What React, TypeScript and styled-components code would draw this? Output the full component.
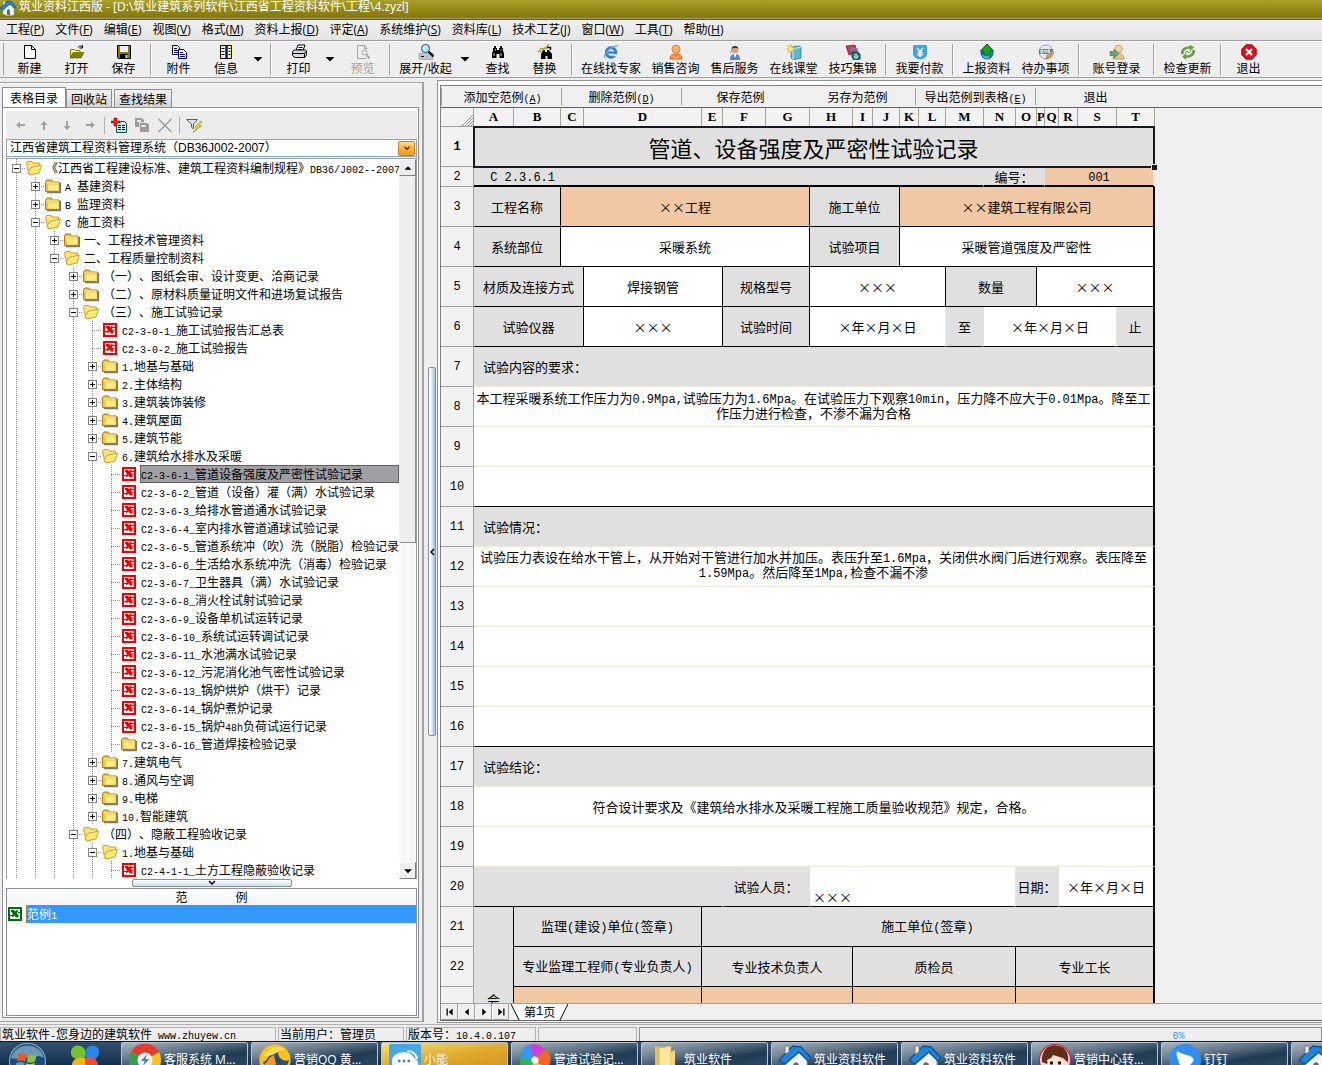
import React from 'react';
import styled, { createGlobalStyle, css } from 'styled-components';

const CJK = '"Noto Sans CJK SC", sans-serif';
const UI = `"Open Sans", ${CJK}`;
const MONO = '"Liberation Mono", monospace';

const GlobalStyle = createGlobalStyle`
  *, *::before, *::after { box-sizing: border-box; }
  body { margin: 0; background: #eeeeee; }
  body, button, select, table {
    font-family: ${CJK};
    font-size: 12px;
    line-height: 16px;
    color: #000;
    text-spacing-trim: space-all;
  }
  button {
    margin: 0; padding: 0; border: 0; background: none; white-space: nowrap;
  }
  ul { list-style: none; margin: 0; padding: 0; }
  svg { display: block; flex: none; }
`;

/* ---------- text with half-width Latin runs ---------- */

const Latin = styled.span<{ $size: number }>`
  font-family: ${MONO};
  font-size: ${p => p.$size}px;
  line-height: 1;
  white-space: pre;
`;

function Mixed({ text, size = 10 }: { text: string; size?: number }) {
  return (
    <>
      {text.split(/([\x20-\x7e]+)/).map((run, i) =>
        i % 2 ? <Latin key={i} $size={size}>{run}</Latin> : run
      )}
    </>
  );
}

function Mnemonic({ label, letter, latin }: { label: string; letter: string; latin?: boolean }) {
  if (latin) {
    return <>{label}<Latin $size={10}>(<u>{letter}</u>)</Latin></>;
  }
  return <>{label}(<u>{letter}</u>)</>;
}

/* ---------- icons ---------- */

const art: Record<string, React.ReactNode> = {
  new: <path d="M2.500 1.500h7l4 4v9h-11zM9.500 1.500v4h4" fill="#fff" stroke="#000" />,
  open: (
    <>
      <path d="M1.500 13V5.500h4l1 1h4.500V9" fill="#ffff66" stroke="#808000" />
      <path d="M1 14l3-5.500h11L12 14z" fill="#808000" stroke="#5c5c00" strokeWidth=".6" />
      <path d="M9 3.500c1.500-2 3.500-2 4.500 0M13.500 1v3h-3" fill="none" stroke="#000" />
    </>
  ),
  save: (
    <>
      <path d="M1.500 1.500h13v13h-12l-1-1z" fill="#808000" stroke="#000" />
      <path d="M4 2h8v6H4z" fill="#eee" />
      <path d="M4 10h8v4.500H4z" fill="#000" />
      <path d="M9.500 11h2v3h-2z" fill="#eee" />
    </>
  ),
  copy: (
    <>
      <path d="M1.500 1.500h5l2 2v7h-7z" fill="#fff" stroke="#000" />
      <path d="M3 4.500h3M3 6.500h4M3 8.500h4" stroke="#000080" />
      <path d="M7.500 5.500h5l3 3v6h-8z" fill="#fff" stroke="#000080" />
      <path d="M9 8.500h3M9 10.500h5M9 12.500h5" stroke="#000080" />
    </>
  ),
  info: (
    <>
      <path d="M2.500 1.500h11v13h-11z" fill="#ffff33" stroke="#000" />
      <path d="M6 2h5v12H6z" fill="#fff" />
      <path d="M8.500 1v14" stroke="#0000d0" strokeWidth="2.500" />
      <path d="M3.500 4.500h3m-3 3h3m-3 3h3M10.500 4.500h2m-2 3h2m-2 3h2" stroke="#000" />
    </>
  ),
  print: (
    <>
      <path d="M5 6.500l2-5.500h7l-2 5.500" fill="#fff" stroke="#000" />
      <path d="M7.500 3.500h4M7 5.500h4" stroke="#000" />
      <path d="M1.500 7.500l2-1.500h11l1 1v4l-2 2.500H4l-2.500-2z" fill="#ddd" stroke="#000" />
      <path d="M2 9.500h11.500l1.500-2M4 13.500h9M13.500 9.500v4" stroke="#000" fill="none" />
      <path d="M9 11h2v1H9z" fill="#ee0" />
    </>
  ),
  preview: (
    <g fill="none" stroke="#a5a5a5">
      <path d="M11.500 5V3.500l-2-2h-7v13h9M9.500 1.500v3h3" />
      <circle cx="9.500" cy="8.500" r="2.500" />
      <path d="M11.500 10.500l3 4" strokeWidth="2" />
    </g>
  ),
  expand: (
    <>
      <path d="M1 9.500h14v6H1z" fill="#c4c4c4" stroke="#999" strokeWidth=".6" />
      <path d="M3 12.500h3" stroke="#000" />
      <path d="M10.500 7.500l5 5" stroke="#111" strokeWidth="2.400" />
      <circle cx="7.500" cy="4.500" r="4" fill="#bfe6ff" stroke="#1d4b86" />
      <path d="M5.500 4.500c0-1.500 1-2 2-2" stroke="#fff" fill="none" />
    </>
  ),
  find: (
    <>
      <path d="M4 2h2v2h1v2h2V4h1V2h2v2h1v3l1 2v5H9.500v-4h-3v4H2V9l1-2V4h1z" fill="#000" />
      <path d="M4 9v3M11 9v3M5.500 5v1.500M11 5v1.500" stroke="#eee" strokeWidth=".8" />
    </>
  ),
  replace: (
    <>
      <path d="M6 6h2v2h2V6h2l3 4v5h-4.500v-3H8.500v3H4v-5z" fill="#000" />
      <path d="M1 8l3-4 2 1 6-5-3 5-2-.5-3 3z" fill="#ffee00" stroke="#776600" strokeWidth=".6" />
      <path d="M10 3.500h3.500V6" fill="none" stroke="#000" strokeWidth="1.400" />
    </>
  ),
  ie: (
    <>
      <circle cx="8" cy="8.500" r="4.700" fill="none" stroke="#2f7de0" strokeWidth="3" />
      <path d="M5 8.500h7" stroke="#2f7de0" strokeWidth="2.200" />
      <path d="M10 10.200h5v2h-5z" fill="#eee" />
      <path d="M1.500 14c-1.500-4 8-13 13.500-12" fill="none" stroke="#6fa9ea" strokeWidth="1.200" />
    </>
  ),
  sales: (
    <>
      <path d="M2 15c0-4 2.500-5 6-5s6 1 6 5z" fill="#ff8a3c" stroke="#e8641b" />
      <circle cx="8" cy="5.200" r="4" fill="#ffb066" stroke="#f07a2a" />
      <path d="M5 12.500l3 1.500 3-1.500" fill="none" stroke="#ffd9b0" />
    </>
  ),
  support: (
    <>
      <path d="M3 16c0-5 2-6 5-6s5 1 5 6z" fill="#5b7fd0" />
      <path d="M6.500 10h3L8 14z" fill="#fff" />
      <circle cx="8" cy="5.800" r="3.400" fill="#d9a27c" />
      <path d="M4.500 5C4.500 1 11.500 1 11.500 5L10 4H6z" fill="#333" />
      <path d="M3 9c2-1 2-2 1.500-4" stroke="#99a" fill="none" />
    </>
  ),
  lesson: (
    <>
      <path d="M5 3l8-1 2 1v11l-8 2-2-2z" fill="#5fb4dc" stroke="#2b7da8" strokeWidth=".8" />
      <path d="M7 5l8-2M7 5v11" stroke="#c9ecfa" />
      <path d="M5 0v10M0 5h10M1.500 1.500l7 7M8.500 1.500l-7 7" stroke="#f5b61c" strokeWidth="1.200" />
      <circle cx="5" cy="5" r="2" fill="#fff6a8" />
    </>
  ),
  tips: (
    <>
      <path d="M1 2l9-1 2 7-8 3z" fill="#c43a52" stroke="#7d1830" strokeWidth=".7" />
      <path d="M4 3l9 1 1 6-7 1z" fill="#7680b8" opacity=".7" />
      <path d="M7 8h5l3 2v5l-6 1-2-3z" fill="#21797c" stroke="#0c4044" />
      <path d="M9 13l2-3 2 3zM9.500 14h3" stroke="#c9f5ef" fill="none" />
    </>
  ),
  pay: (
    <>
      <path d="M2 1h12l1 1v7c0 4-3 6-7 6s-7-2-7-6V2z" fill="#35a7ee" />
      <path d="M5 4l3 3.500L11 4M8 7.500V13M5 8.500h6M5 10.800h6" stroke="#fff" strokeWidth="1.600" fill="none" />
    </>
  ),
  upload: (
    <>
      <circle cx="8" cy="9" r="6.500" fill="#1c62c8" />
      <path d="M3 12c2-4 4 1 6-1s5 1 4-3l-4 7-4-1z" fill="#35b0f0" />
      <path d="M8 0l6.500 7h-3.500v4H5V7H1.500z" fill="#18a51c" stroke="#0b6c12" />
    </>
  ),
  todo: (
    <>
      <circle cx="8" cy="8" r="7" fill="#dfe9fa" stroke="#8ea6d8" />
      <path d="M1 5h14v5H1z" fill="#4f7fd0" />
      <path d="M3 6v3h1.500l.5-1.500L4.500 6zM6.500 6l1 3 1-3M10 6v3h1.500V6z" stroke="#fff" fill="none" />
      <path d="M8 15l1-3.500 5-4.500 2 2-5 4.500z" fill="#f59b1e" stroke="#a55d0c" strokeWidth=".6" />
      <path d="M14 7l2 2" stroke="#e77ab5" strokeWidth="1.500" />
    </>
  ),
  login: (
    <>
      <path d="M4 15c0-4 2-5 5.500-5s5.500 1 5.500 5z" fill="#e6c38a" stroke="#c79d5d" />
      <circle cx="9.500" cy="5" r="3.800" fill="#f0d5a5" stroke="#cda566" />
      <path d="M1 7.500h4V5l5 4.500L5 14v-2.500H1z" fill="#68a077" stroke="#447a52" strokeWidth=".7" />
    </>
  ),
  update: (
    <g fill="none" stroke="#6f9a4c" strokeWidth="2.600">
      <path d="M2.500 10c-1-4 3-7 8-6.500" />
      <path d="M13.500 6c1 4-3 7-8 6.500" />
      <path d="M10 1l4 2.500-4 3zM6 9.500L2.500 12.500l3.500 3z" fill="#6f9a4c" strokeWidth=".5" />
      <path d="M5 9l2-2 1.500 2L11 7" strokeWidth="1" />
    </g>
  ),
  exit: (
    <>
      <path d="M5 .8h6L15.200 5v6L11 15.200H5L.8 11V5z" fill="#d8151c" stroke="#9c0a10" />
      <path d="M5 5l6 6M11 5l-6 6" stroke="#fff" strokeWidth="2.200" />
    </>
  ),
  house: (
    <>
      <path d="M0 13l3-3 3 4zM16 13l-3-3-2 5z" fill="#3fa935" />
      <path d="M3 7l5-4 6 4v8l-6 1-5-2z" fill="#f4f6f8" stroke="#9aa6b0" strokeWidth=".6" />
      <path d="M7 15v-4c0-2.500 3-2.500 3 0v4.500z" fill="#5f6b75" />
      <path d="M0 8L7 1l4 .5L16 7l-1.500 1.500L10 4 3 10z" fill="#1d85dd" stroke="#0d5498" strokeWidth=".7" />
      <path d="M3 1h2v3L3 5z" fill="#eee" stroke="#777" strokeWidth=".5" />
    </>
  ),
  arrowLeft: <path d="M3 8l4-3.500V7h5v2H7v2.500z" fill="#a0a0a0" />,
  arrowUp: <path d="M8 4l3.500 4H9v5H7V8H4.500z" fill="#a0a0a0" />,
  arrowDown: <path d="M8 13l3.500-4H9V4H7v5H4.500z" fill="#a0a0a0" />,
  arrowRight: <path d="M13 8L9 4.500V7H4v2h5v2.500z" fill="#a0a0a0" />,
  addDoc: (
    <>
      <path d="M5.500 4.500h8l2 2v9h-10z" fill="#b9f0f0" stroke="#1d4a55" />
      <path d="M7 8.500h3m1 0h3M7 10.500h3m1 0h3M7 12.500h3m1 0h3" stroke="#000" />
      <path d="M0 4h3V1h3v3h3v2H6v3H3V6H0z" fill="#d42a1a" stroke="#7c0f06" strokeWidth=".6" />
    </>
  ),
  multi: (
    <>
      <path d="M1 1h7l2 2v7H1z" fill="#9c9c9c" />
      <path d="M3 3h4v2H3z" fill="#eee" />
      <path d="M5.500 5.500h7l3 2v8h-10z" fill="#9c9c9c" stroke="#eee" strokeWidth=".8" />
      <path d="M7.500 8h4v2h-4z" fill="#eee" />
    </>
  ),
  cross: <path d="M1.500 2l13 13M14.500 2L1.500 15" stroke="#9c9c9c" strokeWidth="1.500" />,
  filter: (
    <>
      <path d="M.5 2.500h11L7.500 7v5l-2-2V7z" fill="#dfe6ea" stroke="#47606e" />
      <path d="M14.500 4L9 10h2.500L7 15.500l8-6.500h-2.500L16 5z" fill="#f7e22a" stroke="#8c7a0a" strokeWidth=".6" />
    </>
  ),
  folder: (
    <>
      <path d="M2 14.500h13.500V5" stroke="#777" fill="none" strokeWidth="1.400" />
      <path d="M.5 4l1.500-2h4l1.500 2H14l.5 1v8.500H.5z" fill="#f3c23f" stroke="#b0800f" />
      <path d="M3 6.500h10.500v6H3z" fill="#ffec8c" />
      <path d="M1.500 5h12" stroke="#fff3b5" />
    </>
  ),
  folderOpen: (
    <>
      <path d="M.5 3l1-1.500h4.500l1 1.500h6.500v3L3 14.500z" fill="#fbe27a" stroke="#d3a020" />
      <path d="M5 7.500l10.500-2.500L13 13l-9 2-2-3z" fill="#ffe870" stroke="#d3a020" />
      <path d="M6.500 8.500l7-1.500" stroke="#fffbd8" />
    </>
  ),
  sheetRed: (
    <>
      <path d="M1 1h14v14H1z" fill="#f00000" />
      <path d="M3 3h10v10H3z" fill="#fff" />
      <path d="M4 4h3l4.500 5v2.500H9L4 5.500z" fill="#f00000" />
      <path d="M10.500 4.500L5 10.500" stroke="#f00000" strokeWidth="2" />
      <path d="M11 5.500h2M11 8h2M3 9.500h2" stroke="#f00000" />
    </>
  ),
  sheetGreen: (
    <>
      <path d="M1 1h14v14H1z" fill="#066b0d" />
      <path d="M3 3h10v10H3z" fill="#fff" />
      <path d="M4 4h3l4.500 5v2.500H9L4 5.500z" fill="#066b0d" />
      <path d="M10.500 4.500L5 10.500" stroke="#066b0d" strokeWidth="2" />
      <path d="M11 6.500h2M3 9.500h2" stroke="#066b0d" />
    </>
  ),
  chevronDown: <path d="M4 6l4 4 4-4" fill="none" stroke="#5b2500" strokeWidth="2" />,
  triUp: <path d="M4 10l4-4 4 4z" fill="#000" />,
  triDown: <path d="M3.500 6h9L8 10.500z" fill="#000" />,
  first: <path d="M4 4h1.500v8H4zM11 4v8L6.500 8z" fill="#000" />,
  prev: <path d="M10 4v8L5.500 8z" fill="#000" />,
  next: <path d="M6 4v8l4.500-4z" fill="#000" />,
  last: <path d="M5 4v8l4.500-4zM10.500 4H12v8h-1.500z" fill="#000" />,
  windows: (
    <>
      <circle cx="8" cy="8" r="7.800" fill="#1b4d7c" stroke="#7fa8c4" strokeWidth=".5" />
      <path d="M.8 6.500a7.500 7.500 0 0 1 14.400 0C11 4 6 8 .8 6.500z" fill="#8fb6cf" opacity=".7" />
      <path d="M4 5c1.500-.8 2.500-.6 3.700 0L7 8c-1-.5-2.200-.6-3.600 0z" fill="#ee5a24" />
      <path d="M8.300 5.200c1.200.5 2.200.5 3.700-.2L11.300 8c-1.500.7-2.500.7-3.600.2z" fill="#82c341" />
      <path d="M3.200 8.600c1.400-.6 2.600-.5 3.600 0L6 11.500c-1-.5-2.200-.5-3.600 0z" fill="#38a6ea" />
      <path d="M7.500 8.800c1.200.5 2.200.5 3.700-.1l-.8 3c-1.400.6-2.500.6-3.600.1z" fill="#fcc82e" />
    </>
  ),
  pinwheel: (
    <>
      <path d="M.5 5c0-4 5-5 7.500-1.500v4C5 9 .5 9 .5 5z" fill="#72c42c" />
      <path d="M8 4.500C9 .5 15.500.5 15.500 4.500S12 10 8 7.500z" fill="#2a86e8" />
      <path d="M8 8c4-1 7 1 7 4s-6 4-7 0z" fill="#ef4a35" />
      <path d="M8 8c-4-1-7 1-7 4s6 4 7 0z" fill="#fbb515" />
    </>
  ),
  chrome: (
    <>
      <circle cx="8" cy="8" r="8" fill="#f5c518" />
      <path d="M8 8L1 4a8 8 0 0 1 14 0z" fill="#e33b2e" />
      <path d="M8 8L1 4a8 8 0 0 0 6 12z" fill="#2fa34c" />
      <circle cx="8" cy="8" r="3.800" fill="#fff" />
      <path d="M9 5L6 8.500h1.800L7 11l3-3.500H8.200z" fill="#3f78f0" />
    </>
  ),
  qq: (
    <>
      <circle cx="8" cy="8" r="7.800" fill="#fbc21a" />
      <path d="M2 9c2 0 2-3 5-4.500 1-1 2-1.500 3-1.200-1 1.700 0 3.700 2 4.700 1 .5 2 .5 3 0-1 4-3 6-7 6-3 0-5-2-6-5z" fill="#2a4f70" />
      <path d="M2.500 10c2-.5 2-3.500 5-4.500l1 4.500-3 3z" fill="#f59c1c" />
      <path d="M2 6c3-4 8-6 11-3-4 0-6 4-11 3z" fill="#ffdf55" />
    </>
  ),
  chat: (
    <>
      <rect width="16" height="16" rx="1" fill="#41a9e6" />
      <path d="M1.500 8.500c0-5 9.500-6 11-1.500 3 1 2.500 5 .5 5.500H4c-2 0-2.500-2-2.500-4z" fill="#fff" />
      <path d="M9 3.500c3 0 5 2 5 4" stroke="#fff" fill="none" />
      <path d="M4.500 8.500h1.200m1.200 0h1.200m1.200 0h1.200" stroke="#2c86c9" strokeWidth="1.300" />
    </>
  ),
  rainbow: (
    <>
      <path d="M8 8L3 1.500C6-1 11 0 13 3z" fill="#d23fd6" />
      <path d="M8 8l5-5.500c4 3 3 8 1 10z" fill="#f8622c" />
      <path d="M8 8l6 4.500c-3 4-8 4-10 2z" fill="#f3c11c" />
      <path d="M8 8l-4 6.500C0 12 0 8 1 5z" fill="#2fb457" />
      <path d="M8 8L.5 7C1 3 3 1 5 .5z" fill="#2b9cf0" />
      <circle cx="8" cy="8" r="1.800" fill="#fff" />
    </>
  ),
  folderBig: (
    <>
      <path d="M3 1l7 1v14H3z" fill="#e6c15a" />
      <path d="M5 2l6-1v15H5z" fill="#fbe79b" stroke="#d6ad45" strokeWidth=".4" />
      <path d="M11 4l2-1v13h-2z" fill="#f3d67a" />
    </>
  ),
  girl: (
    <>
      <circle cx="8" cy="8" r="7.800" fill="#f4d9d3" stroke="#d51e3c" strokeWidth=".6" />
      <path d="M1.500 9C1 2 6 0 9 .8c5 .5 6 5 5.500 8.500L12 7 7 5.500 4 10z" fill="#5f2f1a" />
      <path d="M4 8l4-2 4.500 2.500V13H5z" fill="#fde3d2" />
      <path d="M5.500 9.500h1.500M9.500 9.500H11" stroke="#2a120a" strokeWidth="1.400" />
    </>
  ),
  ding: (
    <>
      <circle cx="8" cy="8" r="8" fill="#2f8ef0" />
      <path d="M4 3.500c3 2 7 2 8 3.500s-1 3-2 4h1.500L7.500 15l.5-3H6.500l.5-1C5 10.500 4.500 9 5 8.500 4 7.500 3.500 5 4 3.500z" fill="#fff" />
    </>
  )
};

function Icon({ name, size = 16 }: { name: string; size?: number }) {
  return <svg width={size} height={size} viewBox="0 0 16 16" aria-hidden="true">{art[name]}</svg>;
}

/* ---------- window frame ---------- */

const Window = styled.div`
  display: flex;
  flex-direction: column;
  height: 100vh;
  overflow: hidden;
  background: #eeeeee;
`;

const TitleBar = styled.header`
  flex: none;
  display: flex;
  align-items: flex-start;
  gap: 3px;
  height: 20px;
  overflow: hidden;
  border-bottom: 1px solid #5f5a3a;
  background: linear-gradient(#aca02e, #9a8f1a 40%, #83770f 90%, #a8a47c);
  color: #fff;
  font-family: ${UI};
  line-height: 14px;
  white-space: pre;
`;

const MenuBar = styled.nav`
  flex: none;
  display: flex;
  align-items: center;
  gap: 11px;
  height: 21px;
  padding-left: 6px;
  border-bottom: 1px solid #a0a0a0;
  background: linear-gradient(#f0f0f0, #e4e4e4);
  button { font-family: ${UI}; }
`;

const Toolbar = styled.div`
  flex: none;
  display: flex;
  align-items: stretch;
  height: 37px;
  padding-left: 3px;
  border-bottom: 1px solid #a0a0a0;
  box-shadow: inset 0 1px #fff;
`;

const Grip = styled.span`
  flex: none;
  align-self: stretch;
  width: 3px;
  margin: 2px 0;
  border-left: 1px solid #a0a0a0;
`;

const ToolButton = styled.button<{ $width: number }>`
  display: flex;
  flex-direction: column;
  align-items: center;
  width: ${p => p.$width}px;
  padding-top: 3px;
  &:disabled { color: #a0a0a0; }
`;

const DropButton = styled.button`
  display: flex;
  align-items: center;
  width: 17px;
`;

const Divider = styled.span`
  flex: none;
  width: 8px;
  margin: 3px 0 2px;
  background: linear-gradient(90deg, transparent 3px, #a0a0a0 3px 4px, #fff 4px 5px, transparent 5px);
`;

const Main = styled.main`
  flex: 1;
  display: flex;
  min-height: 0;
  padding: 2px 0 1px;
`;

/* ---------- left pane ---------- */

const Side = styled.section`
  flex: none;
  display: flex;
  flex-direction: column;
  width: 424px;
  margin: 2px 0 1px;
  padding: 4px 3px 3px 2px;
  border: 1px solid #a0a0a0;
  border-left: 0;
  border-right: 2px solid #a0a0a0;
  box-shadow: inset 0 1px #fff;
`;

const Tabs = styled.div`
  flex: none;
  display: flex;
  align-items: flex-end;
  gap: 2px;
  height: 20px;
`;

const Tab = styled.button<{ $active?: boolean }>`
  height: 18px;
  padding: 0 4px;
  border: 1px solid #8c8e98;
  border-bottom: 0;
  background: linear-gradient(#f2f2f2, #d4d4d4);
  ${p => p.$active && css`
    height: 20px;
    padding: 0 7px;
    margin-right: -2px;
    background: #fff;
  `}
`;

const TabPage = styled.div`
  flex: 1;
  display: flex;
  flex-direction: column;
  min-height: 0;
  padding: 3px 1px 1px 3px;
  border: 1px solid #8c8e98;
  background: #fff;
`;

const TreeTools = styled.div`
  flex: none;
  display: flex;
  align-items: center;
  gap: 7px;
  height: 28px;
  padding-left: 7px;
  background: #ececec;
`;

const ToolLine = styled.span`
  width: 1px;
  height: 17px;
  margin: 0 -1px;
  background: #b0b0b0;
`;

const Combo = styled.label`
  flex: none;
  display: flex;
  align-items: center;
  height: 18px;
  padding-right: 1px;
  margin-bottom: 1px;
  border: 1px solid #a0a0a0;
  border-bottom-color: #7aa7d0;
`;

const ComboSelect = styled.select`
  flex: 1;
  min-width: 0;
  height: 16px;
  padding: 0 3px;
  border: 0;
  appearance: none;
  background: #fff;
  font-family: "Liberation Sans", ${CJK};
`;

const ComboArrow = styled.span`
  display: grid;
  place-items: center;
  width: 17px;
  height: 15px;
  border: 1px solid #b8862a;
  border-radius: 2px;
  background: linear-gradient(#ffdc8e, #ffb13a 50%, #f99a16);
`;

const TreeFrame = styled.div`
  flex: 1;
  display: flex;
  min-height: 0;
  border: 1px solid #a0a0a0;
  border-bottom: 0;
`;

const Tree = styled.ul`
  flex: 1;
  min-width: 0;
  overflow: hidden;
`;

const dots = 'repeating-linear-gradient(#909090 0 1px, transparent 1px 2px)';
const dotsAcross = 'repeating-linear-gradient(90deg, #909090 0 1px, transparent 1px 2px)';

const TreeRow = styled.li`
  display: flex;
  align-items: center;
  height: 18px;
`;

const Guide = styled.span<{ $branch?: boolean }>`
  flex: none;
  display: flex;
  align-items: center;
  width: 19px;
  height: 18px;
  padding-left: 5px;
  background-image: ${dots}, ${p => (p.$branch ? dotsAcross : 'none')};
  background-repeat: no-repeat;
  background-size: 1px 18px, 9px 1px;
  background-position: 9px 0, 9px 9px;
`;

const Expander = styled.button`
  display: grid;
  place-items: center;
  width: 9px;
  height: 9px;
  border: 1px solid #848484;
  background: #fff;
`;

const TreeLabel = styled.button<{ $selected?: boolean }>`
  flex: none;
  height: 18px;
  margin-left: 3px;
  padding: 0 1px;
  border: 1px solid transparent;
  border-width: 1px 0;
  line-height: 14px;
  text-align: left;
  ${p => p.$selected && css`
    flex: 1;
    border: 1px solid #606060;
    padding: 0;
    background: #a09fa4;
  `}
`;

const ScrollBar = styled.div`
  flex: none;
  display: flex;
  flex-direction: column;
  width: 17px;
  background: repeating-conic-gradient(#f4f4f4 0 25%, #fff 0 50%) 0 0 / 2px 2px;
`;

const ScrollButton = styled.button`
  display: grid;
  place-items: center;
  height: 17px;
  border: 1px solid #fff;
  border-right-color: #808080;
  border-bottom-color: #808080;
  background: #eeeeee;
`;

const ScrollThumb = styled.div`
  height: 51%;
  border: 1px solid #eee;
  border-right-color: #909090;
  border-bottom-color: #909090;
  background: #eeeeee;
`;

const ScrollSpace = styled.span`
  flex: 1;
`;

const SplitRow = styled.div`
  flex: none;
  display: flex;
  justify-content: center;
  height: 9px;
`;

const SplitHandle = styled.button`
  display: grid;
  place-items: center;
  width: 160px;
  height: 8px;
  overflow: hidden;
  border: 1px solid #8c8e98;
  border-radius: 2px;
  background: linear-gradient(#fff, #c8e2ee);
`;

const Samples = styled.section`
  flex: none;
  height: 128px;
  border: 1px solid #8c8e98;
`;

const SamplesHead = styled.h2`
  display: flex;
  justify-content: center;
  gap: 48px;
  height: 16px;
  margin: 0;
  background: linear-gradient(#fff, #f2f4f6);
  font-size: 12px;
  font-weight: 400;
`;

const SampleRow = styled.div`
  display: flex;
  align-items: center;
  gap: 3px;
  height: 18px;
`;

const SampleLabel = styled.button`
  flex: 1;
  height: 18px;
  border: 1px dotted #b8793e;
  background: #3399ff;
  color: #fff;
  line-height: 14px;
  text-align: left;
`;

const Splitter = styled.div`
  flex: none;
  display: flex;
  flex-direction: column;
  justify-content: center;
  width: 13px;
  padding: 0 1px 0 4px;
`;

const SplitterGrip = styled.button`
  display: grid;
  place-items: center;
  height: 369px;
  overflow: hidden;
  border: 1px solid #8c8e98;
  border-radius: 2px;
  background: linear-gradient(90deg, #fff, #e4f2f8 40%, #98c2da);
`;

/* ---------- right pane ---------- */

const Work = styled.section`
  flex: 1;
  display: flex;
  flex-direction: column;
  min-width: 0;
  padding: 4px 0 1px 2px;
  border: 1px solid #909090;
  border-right: 0;
  background: #fff;
`;

const WorkInner = styled.div`
  flex: 1;
  display: flex;
  flex-direction: column;
  min-height: 0;
  border: 1px solid #808080;
  border-right: 0;
  border-bottom-color: #606060;
  background: #efefef;
`;

const SheetTools = styled.div`
  flex: none;
  display: flex;
  align-items: center;
  height: 22px;
  border-bottom: 1px solid #606060;
`;

const SheetTool = styled.button<{ $width?: number; $line?: boolean }>`
  width: ${p => p.$width ?? 120}px;
  height: 17px;
  border-right: 1px solid ${p => (p.$line ? '#a0a0a0' : 'transparent')};
`;

const SheetScroll = styled.div`
  flex: 1;
  min-height: 0;
  overflow: hidden;
`;

const Sheet = styled.table`
  width: 714px;
  table-layout: fixed;
  border-collapse: separate;
  border-spacing: 0;
  th, td { padding: 0; }
`;

const SheetRow = styled.tr<{ $height: number }>`
  height: ${p => p.$height}px;
`;

const ColHead = styled.th`
  height: 19px;
  border-right: 1px solid #a9a693;
  border-bottom: 1px solid #a0a0a0;
  background: #f2f2f2;
  font: bold 13px/18px "Liberation Serif", serif;
  overflow: hidden;
`;

const Corner = styled(ColHead)`
  vertical-align: bottom;
  svg { margin-left: auto; }
`;

const RowHead = styled.th<{ $bold?: boolean }>`
  border-right: 1px solid #a0a0a0;
  border-bottom: 1px solid #a0a0a0;
  background: #f2f2f2;
  font: ${p => (p.$bold ? 'bold' : 'normal')} 12px/16px ${MONO};
`;

type Fill = 'gray' | 'white' | 'peach';
const fills: Record<Fill, string> = { gray: '#e0e0e0', white: '#ffffff', peach: '#f0c8a4' };

const Cell = styled.td<{
  $fill: Fill; $right: string; $bottom: string; $thick?: boolean; $align?: string;
}>`
  background: ${p => fills[p.$fill]};
  border-right: 1px solid ${p => p.$right};
  border-bottom: ${p => (p.$thick ? 2 : 1)}px solid ${p => p.$bottom};
  text-align: ${p => p.$align ?? 'center'};
  font-size: 13px;
  line-height: 13px;
  white-space: nowrap;
  &:last-child { border-right-width: 2px; }
`;

const Indent = styled.span`
  display: block;
  padding: 0 9px;
`;

const Low = styled.span`
  display: block;
  padding: 20px 3px 0;
`;

const Wrapped = styled.span`
  display: block;
  padding-bottom: 3px;
  white-space: pre;
`;

const SignCell = styled(Cell)`
  && {
    vertical-align: top;
    padding-top: 86px;
  }
`;

const TitleCell = styled(Cell)`
  position: relative;
  font-size: 22px;
  line-height: 30px;
  &::before {
    content: '';
    position: absolute;
    inset: -1px -2px -2px -1px;
    border: 2px solid #181822;
  }
  &::after {
    content: '';
    position: absolute;
    right: -4px;
    bottom: -4px;
    width: 6px;
    height: 6px;
    border: 1px solid #fff;
    border-right: 0;
    border-bottom: 0;
    background: #181822;
  }
`;

const PageBar = styled.div`
  flex: none;
  display: flex;
  height: 17px;
  border-top: 1px solid #a0a0a0;
`;

const PageButton = styled.button`
  display: grid;
  place-items: center;
  width: 17px;
  border-right: 1px solid #a0a0a0;
  border-bottom: 1px solid #a0a0a0;
  border-left: 1px solid #fff;
`;

const PageTab = styled.button`
  display: flex;
  align-items: center;
  margin-left: 2px;
  background: linear-gradient(#fff, #fff) 7px 0 / calc(100% - 14px) 100% no-repeat;
`;

/* ---------- status bar and taskbar ---------- */

const StatusBar = styled.footer`
  flex: none;
  display: flex;
  gap: 2px;
  height: 17px;
  padding-top: 2px;
  border-top: 1px solid #b0b0b0;
`;

const StatusCell = styled.div<{ $width?: number }>`
  ${p => (p.$width ? css`flex: none; width: ${p.$width}px;` : css`flex: 1;`)}
  border: 1px solid #b4b4b4;
  border-width: 1px 1px 0;
  padding-left: 1px;
  line-height: 12px;
  white-space: nowrap;
`;

const Progress = styled(StatusCell)`
  padding-left: 396px;
  color: #3399ff;
  text-align: center;
  border-color: #909090;
`;

const Taskbar = styled.nav`
  flex: none;
  display: flex;
  gap: 3px;
  height: 24px;
  overflow: hidden;
  border-top: 1px solid #0a1622;
  background: linear-gradient(#33506e, #14304c);
`;

const Launch = styled.div`
  flex: none;
  display: flex;
  align-items: flex-start;
  gap: 24px;
  width: 118px;
  padding: 1px 0 0 9px;
`;

const TaskButton = styled.button<{ $active?: boolean }>`
  flex: none;
  display: flex;
  align-items: center;
  gap: 3px;
  width: 127px;
  height: 36px;
  padding-left: 7px;
  border: 1px solid #b9c6d2;
  border-radius: 2px;
  background: ${p => p.$active
    ? 'linear-gradient(170deg, #f6e27a, #e0a92c 45%, #cf8a1c)'
    : 'linear-gradient(170deg, #a9b4be 0, #66798a 30%, #1f3b55 54%, #35506a)'};
  color: #fff;
  font-family: ${UI};
`;

/* ---------- data ---------- */

const menus: [string, string][] = [
  ['工程', 'P'], ['文件', 'F'], ['编辑', 'E'], ['视图', 'V'], ['格式', 'M'], ['资料上报', 'D'],
  ['评定', 'A'], ['系统维护', 'S'], ['资料库', 'L'], ['技术工艺', 'J'], ['窗口', 'W'], ['工具', 'T'], ['帮助', 'H']
];

type Tool = { icon: string; label: string; width?: number; drop?: boolean; off?: boolean };
const tools: (Tool | null)[] = [
  { icon: 'new', label: '新建' }, { icon: 'open', label: '打开' }, { icon: 'save', label: '保存' }, null,
  { icon: 'copy', label: '附件' }, { icon: 'info', label: '信息', width: 48, drop: true }, null,
  { icon: 'print', label: '打印', drop: true }, { icon: 'preview', label: '预览', off: true }, null,
  { icon: 'expand', label: '展开/收起', width: 63, drop: true },
  { icon: 'find', label: '查找' }, { icon: 'replace', label: '替换' }, null,
  { icon: 'ie', label: '在线找专家', width: 70 }, { icon: 'sales', label: '销售咨询', width: 59 },
  { icon: 'support', label: '售后服务', width: 59 }, { icon: 'lesson', label: '在线课堂', width: 59 },
  { icon: 'tips', label: '技巧集锦', width: 59 }, null,
  { icon: 'pay', label: '我要付款', width: 59 }, null,
  { icon: 'upload', label: '上报资料', width: 59 }, { icon: 'todo', label: '待办事项', width: 59 }, null,
  { icon: 'login', label: '账号登录', width: 67 }, null,
  { icon: 'update', label: '检查更新', width: 59 }, null,
  { icon: 'exit', label: '退出' }
];

const moveTools: [string, string][] = [
  ['arrowLeft', '左移'], ['arrowUp', '上移'], ['arrowDown', '下移'], ['arrowRight', '右移']
];
const editTools: [string, string][] = [['addDoc', '添加'], ['multi', '复制'], ['cross', '删除']];

type Node = [depth: number, kind: '+' | '-' | 'x' | 'f', label: string];
const nodes: Node[] = [
  [0, '-', '《江西省工程建设标准、建筑工程资料编制规程》DB36/J002--2007'],
  [1, '+', 'A 基建资料'],
  [1, '+', 'B 监理资料'],
  [1, '-', 'C 施工资料'],
  [2, '+', '一、工程技术管理资料'],
  [2, '-', '二、工程质量控制资料'],
  [3, '+', '（一）、图纸会审、设计变更、洽商记录'],
  [3, '+', '（二）、原材料质量证明文件和进场复试报告'],
  [3, '-', '（三）、施工试验记录'],
  [4, 'x', 'C2-3-0-1_施工试验报告汇总表'],
  [4, 'x', 'C2-3-0-2_施工试验报告'],
  [4, '+', '1.地基与基础'],
  [4, '+', '2.主体结构'],
  [4, '+', '3.建筑装饰装修'],
  [4, '+', '4.建筑屋面'],
  [4, '+', '5.建筑节能'],
  [4, '-', '6.建筑给水排水及采暖'],
  [5, 'x', 'C2-3-6-1_管道设备强度及严密性试验记录'],
  [5, 'x', 'C2-3-6-2_管道（设备）灌（满）水试验记录'],
  [5, 'x', 'C2-3-6-3_给排水管道通水试验记录'],
  [5, 'x', 'C2-3-6-4_室内排水管道通球试验记录'],
  [5, 'x', 'C2-3-6-5_管道系统冲（吹）洗（脱脂）检验记录'],
  [5, 'x', 'C2-3-6-6_生活给水系统冲洗（消毒）检验记录'],
  [5, 'x', 'C2-3-6-7_卫生器具（满）水试验记录'],
  [5, 'x', 'C2-3-6-8_消火栓试射试验记录'],
  [5, 'x', 'C2-3-6-9_设备单机试运转记录'],
  [5, 'x', 'C2-3-6-10_系统试运转调试记录'],
  [5, 'x', 'C2-3-6-11_水池满水试验记录'],
  [5, 'x', 'C2-3-6-12_污泥消化池气密性试验记录'],
  [5, 'x', 'C2-3-6-13_锅炉烘炉（烘干）记录'],
  [5, 'x', 'C2-3-6-14_锅炉煮炉记录'],
  [5, 'x', 'C2-3-6-15_锅炉48h负荷试运行记录'],
  [5, 'f', 'C2-3-6-16_管道焊接检验记录'],
  [4, '+', '7.建筑电气'],
  [4, '+', '8.通风与空调'],
  [4, '+', '9.电梯'],
  [4, '+', '10.智能建筑'],
  [3, '-', '（四）、隐蔽工程验收记录'],
  [4, '-', '1.地基与基础'],
  [5, 'x', 'C2-4-1-1_土方工程隐蔽验收记录']
];
const selectedNode = 17;

const columns: [string, number][] = [
  ['A', 40], ['B', 47], ['C', 23], ['D', 118], ['E', 21], ['F', 43], ['G', 44], ['H', 43], ['I', 20], ['J', 27],
  ['K', 19], ['L', 27], ['M', 38], ['N', 32], ['O', 21], ['P', 8], ['Q', 14], ['R', 19], ['S', 39], ['T', 38]
];

const BLACK = '#000';
const PALE = '#ece9d8';

type CellData = {
  t?: string; span: number; f?: Fill; soft?: boolean; kind?: 'indent' | 'low' | 'wrap' | 'title' | 'sign';
};
type RowData = { height?: number; soft?: boolean; thick?: boolean; cells: CellData[] };

const blank = (soft = true): RowData => ({ soft, cells: [{ span: 20, f: 'white' }] });

const rows: RowData[] = [
  { soft: true, cells: [{ t: '管道、设备强度及严密性试验记录', span: 20, kind: 'title' }] },
  {
    height: 20, thick: true, cells: [
      { t: ' C 2.3.6.1', span: 13, soft: true, kind: 'indent' },
      { t: '编号：', span: 3, soft: true },
      { t: '001', span: 4, f: 'peach', soft: true }
    ]
  },
  {
    cells: [
      { t: '工程名称', span: 2 }, { t: '××工程', span: 5, f: 'peach' },
      { t: '施工单位', span: 3 }, { t: '××建筑工程有限公司', span: 10, f: 'peach' }
    ]
  },
  {
    cells: [
      { t: '系统部位', span: 2 }, { t: '采暖系统', span: 5, f: 'white' },
      { t: '试验项目', span: 3 }, { t: '采暖管道强度及严密性', span: 10, f: 'white' }
    ]
  },
  {
    cells: [
      { t: '材质及连接方式', span: 3 }, { t: '焊接钢管', span: 2, f: 'white' }, { t: '规格型号', span: 2 },
      { t: '×××', span: 5, f: 'white' }, { t: '数量', span: 3 }, { t: '×××', span: 5, f: 'white' }
    ]
  },
  {
    cells: [
      { t: '试验仪器', span: 3 }, { t: '×××', span: 2, f: 'white' }, { t: '试验时间', span: 2 },
      { t: '×年×月×日', span: 5, f: 'white', soft: true }, { t: '至', span: 1, soft: true },
      { t: '×年×月×日', span: 6, f: 'white', soft: true }, { t: '止', span: 1 }
    ]
  },
  { soft: true, cells: [{ t: '试验内容的要求：', span: 20, kind: 'indent' }] },
  {
    soft: true, cells: [{
      t: '本工程采暖系统工作压力为0.9Mpa,试验压力为1.6Mpa。在试验压力下观察10min，压力降不应大于0.01Mpa。降至工\n作压力进行检查，不渗不漏为合格',
      span: 20, f: 'white', kind: 'wrap'
    }]
  },
  blank(),
  blank(false),
  { soft: true, cells: [{ t: '试验情况：', span: 20, kind: 'indent' }] },
  {
    soft: true, cells: [{
      t: '试验压力表设在给水干管上，从开始对干管进行加水并加压。表压升至1.6Mpa，关闭供水阀门后进行观察。表压降至\n1.59Mpa。然后降至1Mpa,检查不漏不渗',
      span: 20, f: 'white', kind: 'wrap'
    }]
  },
  blank(), blank(), blank(), blank(false),
  { soft: true, cells: [{ t: '试验结论：', span: 20, kind: 'indent' }] },
  { soft: true, cells: [{ t: '符合设计要求及《建筑给水排水及采暖工程施工质量验收规范》规定，合格。', span: 20, f: 'white' }] },
  blank(),
  {
    cells: [
      { span: 5, soft: true }, { t: '试验人员：', span: 2, soft: true },
      { t: '×××', span: 7, f: 'white', soft: true, kind: 'low' }, { t: '日期：', span: 3, soft: true },
      { t: '×年×月×日', span: 3, f: 'white' }
    ]
  },
  {
    cells: [
      { t: '会', span: 1, kind: 'sign' }, { t: '监理(建设)单位(签章)', span: 3 }, { t: '施工单位(签章)', span: 16 }
    ]
  },
  {
    cells: [
      { t: '专业监理工程师(专业负责人)', span: 3 }, { t: '专业技术负责人', span: 4 },
      { t: '质检员', span: 6 }, { t: '专业工长', span: 6 }
    ]
  },
  {
    cells: [
      { span: 3, f: 'peach' }, { span: 4, f: 'peach' }, { span: 6, f: 'peach' }, { span: 6, f: 'peach' }
    ]
  }
];

const tasks: { icon: string; label: string; active?: boolean }[] = [
  { icon: 'chrome', label: '客服系统 M...' },
  { icon: 'qq', label: '营销QQ 黄...' },
  { icon: 'chat', label: '小能', active: true },
  { icon: 'rainbow', label: '管道试验记...' },
  { icon: 'folderBig', label: '筑业软件' },
  { icon: 'house', label: '筑业资料软件' },
  { icon: 'house', label: '筑业资料软件' },
  { icon: 'girl', label: '营销中心转...' },
  { icon: 'ding', label: '钉钉' },
  { icon: 'house', label: '' }
];

/* ---------- parts ---------- */

function TreeItem({ node, selected }: { node: Node; selected: boolean }) {
  const [depth, kind, label] = node;
  const branch = kind === '+' || kind === '-';
  const icon = kind === '+' || kind === 'f' ? 'folder' : kind === '-' ? 'folderOpen' : 'sheetRed';
  return (
    <TreeRow>
      {Array.from({ length: depth }, (_, i) => <Guide key={i} />)}
      <Guide $branch>
        {branch && (
          <Expander aria-label={kind === '+' ? '展开' : '折叠'}>
            <svg width="7" height="7" viewBox="0 0 7 7" aria-hidden="true">
              <path d={kind === '+' ? 'M1 3.500h5M3.500 1v5' : 'M1 3.500h5'} stroke="#000" />
            </svg>
          </Expander>
        )}
      </Guide>
      <Icon name={icon} />
      <TreeLabel $selected={selected}><Mixed text={label} /></TreeLabel>
    </TreeRow>
  );
}

function SheetCell({ cell, row }: { cell: CellData; row: RowData }) {
  const common = {
    colSpan: cell.span,
    $fill: cell.f ?? ('gray' as Fill),
    $right: cell.soft ? (cell.f === 'white' || cell.f === 'peach' ? PALE : '#e2e1d8') : BLACK,
    $bottom: row.soft ? PALE : BLACK,
    $thick: row.thick
  };
  const text = cell.t ? <Mixed text={cell.t} size={12} /> : null;
  if (cell.kind === 'title') return <TitleCell {...common}>{cell.t}</TitleCell>;
  if (cell.kind === 'sign') return <SignCell {...common} rowSpan={3}>{text}</SignCell>;
  if (cell.kind === 'indent') return <Cell {...common} $align="left"><Indent>{text}</Indent></Cell>;
  if (cell.kind === 'low') return <Cell {...common} $align="left"><Low>{text}</Low></Cell>;
  if (cell.kind === 'wrap') return <Cell {...common}><Wrapped>{text}</Wrapped></Cell>;
  return <Cell {...common}>{text}</Cell>;
}

function SheetTable() {
  return (
    <Sheet>
      <colgroup>
        <col width={33} />
        {columns.map(([name, width]) => <col key={name} width={width} />)}
      </colgroup>
      <thead>
        <tr>
          <Corner aria-label="全选">
            <svg width="12" height="12" viewBox="0 0 12 12" aria-hidden="true">
              <path d="M1 12L12 1M4 12l8-8M7 12l5-5M10 12l2-2" stroke="#909090" />
            </svg>
          </Corner>
          {columns.map(([name]) => <ColHead key={name} scope="col">{name}</ColHead>)}
        </tr>
      </thead>
      <tbody>
        {rows.map((row, i) => (
          <SheetRow key={i} $height={row.height ?? 40}>
            <RowHead scope="row" $bold={i === 0}>{i < 22 ? i + 1 : ''}</RowHead>
            {row.cells.map((cell, j) => <SheetCell key={j} cell={cell} row={row} />)}
          </SheetRow>
        ))}
      </tbody>
    </Sheet>
  );
}

export default function App() {
  return (
    <>
      <GlobalStyle />
      <Window>
        <TitleBar>
          <Icon name="house" />
          <span>{'筑业资料江西版 - [D:\\筑业建筑系列软件\\江西省工程资料软件\\工程\\4.zyzl]'}</span>
        </TitleBar>
        <MenuBar>
          {menus.map(([label, letter]) => (
            <button key={label}><Mnemonic label={label} letter={letter} /></button>
          ))}
        </MenuBar>
        <Toolbar>
          <Grip />
          {tools.map((tool, i) => tool === null ? <Divider key={i} /> : (
            <React.Fragment key={i}>
              <ToolButton $width={tool.width ?? 47} disabled={tool.off}>
                <Icon name={tool.icon} />
                {tool.label}
              </ToolButton>
              {tool.drop && <DropButton aria-label={`${tool.label}选项`}><Icon name="triDown" /></DropButton>}
            </React.Fragment>
          ))}
        </Toolbar>
        <Main>
          <Side>
            <Tabs>
              <Tab $active>表格目录</Tab>
              <Tab>回收站</Tab>
              <Tab>查找结果</Tab>
            </Tabs>
            <TabPage>
              <TreeTools>
                {moveTools.map(([icon, label]) => (
                  <button key={icon} aria-label={label}><Icon name={icon} /></button>
                ))}
                <ToolLine />
                {editTools.map(([icon, label]) => (
                  <button key={icon} aria-label={label}><Icon name={icon} /></button>
                ))}
                <ToolLine />
                <button aria-label="筛选"><Icon name="filter" /></button>
              </TreeTools>
              <Combo>
                <ComboSelect aria-label="资料库">
                  <option>江西省建筑工程资料管理系统（DB36J002-2007）</option>
                </ComboSelect>
                <ComboArrow><Icon name="chevronDown" size={10} /></ComboArrow>
              </Combo>
              <TreeFrame>
                <Tree>
                  {nodes.map((node, i) => <TreeItem key={i} node={node} selected={i === selectedNode} />)}
                </Tree>
                <ScrollBar>
                  <ScrollButton aria-label="向上"><Icon name="triUp" size={14} /></ScrollButton>
                  <ScrollThumb />
                  <ScrollSpace />
                  <ScrollButton aria-label="向下"><Icon name="triDown" size={14} /></ScrollButton>
                </ScrollBar>
              </TreeFrame>
              <SplitRow>
                <SplitHandle aria-label="折叠范例">
                  <svg width="8" height="6" viewBox="0 0 8 6" aria-hidden="true">
                    <path d="M1 1l3 3 3-3" fill="none" stroke="#000" strokeWidth="1.500" />
                  </svg>
                </SplitHandle>
              </SplitRow>
              <Samples>
                <SamplesHead><span>范</span><span>例</span></SamplesHead>
                <SampleRow>
                  <Icon name="sheetGreen" />
                  <SampleLabel><Mixed text="范例1" /></SampleLabel>
                </SampleRow>
              </Samples>
            </TabPage>
          </Side>
          <Splitter>
            <SplitterGrip aria-label="折叠目录">
              <svg width="6" height="8" viewBox="0 0 6 8" aria-hidden="true">
                <path d="M5 1L2 4l3 3" fill="none" stroke="#000" strokeWidth="1.500" />
              </svg>
            </SplitterGrip>
          </Splitter>
          <Work>
            <WorkInner>
              <SheetTools>
                <Grip />
                <SheetTool $width={118} $line><Mnemonic label="添加空范例" letter="A" latin /></SheetTool>
                <SheetTool $line><Mnemonic label="删除范例" letter="D" latin /></SheetTool>
                <SheetTool $width={118}>保存范例</SheetTool>
                <SheetTool $width={116} $line>另存为范例</SheetTool>
                <SheetTool $line><Mnemonic label="导出范例到表格" letter="E" latin /></SheetTool>
                <SheetTool>退出</SheetTool>
              </SheetTools>
              <SheetScroll><SheetTable /></SheetScroll>
              <PageBar>
                <PageButton aria-label="第一页"><Icon name="first" size={14} /></PageButton>
                <PageButton aria-label="上一页"><Icon name="prev" size={14} /></PageButton>
                <PageButton aria-label="下一页"><Icon name="next" size={14} /></PageButton>
                <PageButton aria-label="最后一页"><Icon name="last" size={14} /></PageButton>
                <PageTab>
                  <svg width="13" height="16" viewBox="0 0 13 16" aria-hidden="true">
                    <path d="M0 0h13v16H8z" fill="#fff" /><path d="M0 0l8 16" stroke="#000" />
                  </svg>
                  <Mixed text="第1页" size={12} />
                  <svg width="13" height="16" viewBox="0 0 13 16" aria-hidden="true">
                    <path d="M13 0H0v16h5z" fill="#fff" /><path d="M13 0L5 16" stroke="#000" />
                  </svg>
                </PageTab>
              </PageBar>
            </WorkInner>
          </Work>
        </Main>
        <StatusBar>
          <StatusCell $width={276}><Mixed text="筑业软件-您身边的建筑软件 www.zhuyew.cn" /></StatusCell>
          <StatusCell $width={126}>当前用户：管理员</StatusCell>
          <StatusCell $width={130}><Mixed text="版本号：10.4.0.107" /></StatusCell>
          <StatusCell $width={99} />
          <Progress><Mixed text="0%" /></Progress>
        </StatusBar>
        <Taskbar>
          <Launch>
            <Icon name="windows" size={37} />
            <Icon name="pinwheel" size={30} />
          </Launch>
          {tasks.map((task, i) => (
            <TaskButton key={i} $active={task.active} aria-label={task.label || '筑业资料软件'}>
              <Icon name={task.icon} size={32} />
              {task.label}
            </TaskButton>
          ))}
        </Taskbar>
      </Window>
    </>
  );
}
